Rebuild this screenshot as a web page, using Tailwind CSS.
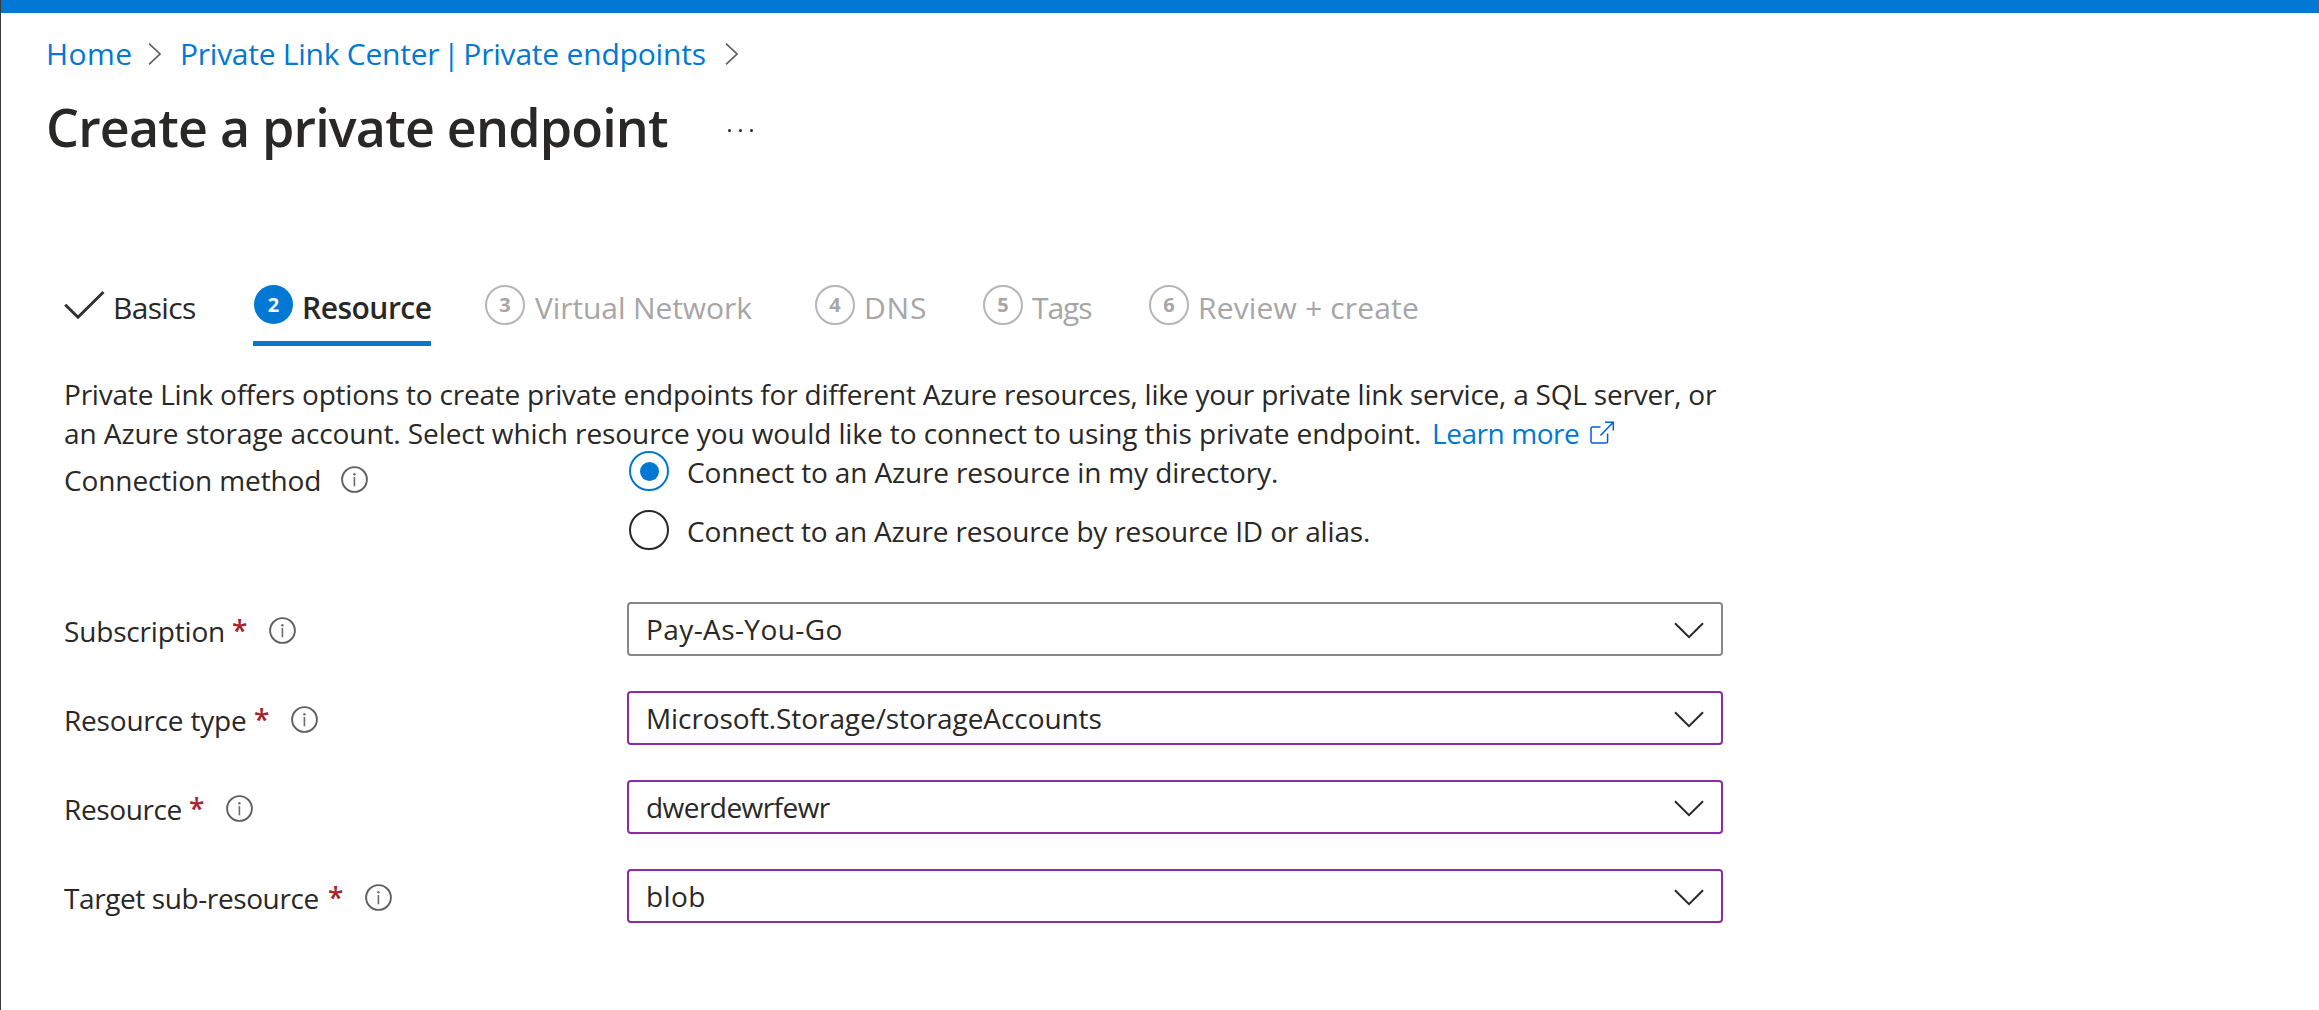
<!DOCTYPE html>
<html lang="en">
<head>
<meta charset="utf-8">
<title>Create a private endpoint</title>
<script src="https://cdn.jsdelivr.net/npm/@tailwindcss/browser@4"></script>
</head>
<body class="h-[1010px] overflow-hidden bg-white font-['Open_Sans',sans-serif] text-[#292827]">
<svg class="hidden">
  <symbol id="info" viewBox="0 0 27 27"><circle cx="13.5" cy="13.5" r="12.4" fill="none" stroke="#5f5f5f" stroke-width="1.9"/><path d="M13.4 11v9.3" stroke="#6b6b6b" stroke-width="1.6"/><circle cx="13.4" cy="8.2" r="1.2" fill="#6b6b6b"/></symbol>
  <symbol id="crumb" viewBox="0 0 13 22"><path d="M1 .6L12 11 1 21.4" fill="none" stroke="#605e5c" stroke-width="1.6"/></symbol>
  <symbol id="down" viewBox="0 0 30 17"><path d="M1 1.2L15 15.2 29 1.2" fill="none" stroke="#292827" stroke-width="2"/></symbol>
</svg>
<div class="flex h-full flex-col border-l border-[#3b3a39] whitespace-nowrap">
  <div class="h-[13px] shrink-0 bg-[#0078d4]"></div>

  <nav class="mt-[21px] flex h-10 items-center pl-[45px] text-[30px] leading-10 text-[#0078d4]">
    <a class="w-[102px] tracking-[0.4px]">Home</a>
    <svg class="h-[22px] w-[13px]"><use href="#crumb"/></svg>
    <a class="ml-[19px] w-[545px]"><span class="tracking-[-0.25px]">Private Link Center</span> <span class="ml-[-4px]">|</span> <span class="ml-[-4px] tracking-[-0.2px]">Private endpoints</span></a>
    <svg class="h-[22px] w-[13px]"><use href="#crumb"/></svg>
  </nav>

  <header class="mt-[18px] flex h-[70px] items-center pl-[45px]">
    <h1 class="w-[682px] text-[52px] leading-[70px] font-semibold tracking-[-0.81px]">Create a private endpoint</h1>
    <div class="mt-[7px] flex gap-[8px]">
      <i class="size-[3px] rounded-full bg-[#292827]"></i><i class="size-[3px] rounded-full bg-[#292827]"></i><i class="size-[3px] rounded-full bg-[#292827]"></i>
    </div>
  </header>

  <div class="mt-[122px] flex h-[62px] items-start pl-[63px] text-[30px] leading-10 text-[#a6a6a6]">
    <div class="flex w-[189px] text-[#292827]">
      <svg class="mt-[6px] h-[30px] w-[41px]" viewBox="0 0 41 30"><path d="M1.2 14.7L14 27.2 39.5 2" fill="none" stroke="#323130" stroke-width="3"/></svg>
      <span class="mt-[4px] ml-[8px] tracking-[-0.66px]">Basics</span>
    </div>
    <div class="flex h-[62px] w-[178px] border-b-5 border-[#0078d4] text-[#292827]">
      <span class="mt-px ml-px flex size-[39px] shrink-0 items-center justify-center rounded-full bg-[#0078d4] text-[20px] font-bold text-white">2</span>
      <span class="mt-[4px] ml-[9px] font-semibold tracking-[-0.5px]">Resource</span>
    </div>
    <div class="ml-[54px] flex w-[330px]">
      <span class="mt-px flex size-10 shrink-0 items-center justify-center rounded-full border-2 border-[#b5b5b5] text-[20px] font-bold">3</span>
      <span class="mt-[4px] ml-[10px] tracking-[-0.1px]">Virtual Network</span>
    </div>
    <div class="flex w-[168px]">
      <span class="mt-px flex size-10 shrink-0 items-center justify-center rounded-full border-2 border-[#b5b5b5] text-[20px] font-bold">4</span>
      <span class="mt-[4px] ml-[9px] tracking-[0.82px]">DNS</span>
    </div>
    <div class="flex w-[166px]">
      <span class="mt-px flex size-10 shrink-0 items-center justify-center rounded-full border-2 border-[#b5b5b5] text-[20px] font-bold">5</span>
      <span class="mt-[4px] ml-[9px] tracking-[-1.1px]">Tags</span>
    </div>
    <div class="flex">
      <span class="mt-px flex size-10 shrink-0 items-center justify-center rounded-full border-2 border-[#b5b5b5] text-[20px] font-bold">6</span>
      <span class="mt-[4px] ml-[9px] tracking-[0.17px]">Review + create</span>
    </div>
  </div>

  <main class="text-[28px] leading-10">
    <div class="mt-[29px] pl-[63px] leading-[39px]">
      <p class="tracking-[-0.209px]">Private Link offers options to create private endpoints for different Azure resources, like your private link service, a SQL server, or</p>
      <div class="flex">
        <p class="w-[1368px] tracking-[-0.083px]">an Azure storage account. Select which resource you would like to connect to using this private endpoint.</p>
        <a class="w-[157px] tracking-[-0.44px] text-[#0078d4]">Learn more</a>
        <svg class="mt-[7px] h-[24px] w-[26px]" viewBox="0 0 26 24"><path d="M11.5 6H3.6Q2 6 2 7.600V20.400Q2 22 3.600 22H17Q18.600 22 18.600 20.400V12.500M11.500 14.500L24 1.500M16 1.300H24.300V9.500" fill="none" stroke="#015cda" stroke-width="1.500"/></svg>
      </div>
    </div>

    <section class="mt-[-2px] flex h-[99px] pl-[63px]">
      <div class="mt-[9px] flex w-[565px]">
        <span class="w-[277px] tracking-[-0.1px]">Connection method</span>
        <svg class="mt-[6px] size-[27px]"><use href="#info"/></svg>
      </div>
      <div class="flex flex-col gap-[19px]">
        <label class="flex h-10"><span class="flex size-10 items-center justify-center rounded-full border-2 border-[#0078d4]"><i class="size-[19px] rounded-full bg-[#0078d4]"></i></span><span class="mt-px ml-[18px] tracking-[-0.135px]">Connect to an Azure resource in my directory.</span></label>
        <label class="flex h-10"><span class="size-10 rounded-full border-2 border-[#292827]"></span><span class="mt-px ml-[18px] tracking-[-0.164px]">Connect to an Azure resource by resource ID or alias.</span></label>
      </div>
    </section>

    <section class="mt-[52px] flex flex-col gap-[35px] pl-[63px]">
      <div class="flex h-[54px]">
        <div class="mt-[9px] flex w-[563px]"><span class="w-[168px] tracking-[-0.17px]">Subscription</span><b class="mt-[-1px] w-[37px] font-semibold text-[#a4262c]">*</b><svg class="mt-[6px] size-[27px]"><use href="#info"/></svg></div>
        <div class="flex w-[1096px] items-center justify-between rounded-[4px] border-2 border-[#8a8886] pr-[17px] pl-[17px]"><span class="tracking-[0.41px]">Pay-As-You-Go</span><svg class="mt-[2px] h-[17px] w-[30px]"><use href="#down"/></svg></div>
      </div>
      <div class="flex h-[54px]">
        <div class="mt-[9px] flex w-[563px]"><span class="w-[190px] tracking-[-0.2px]">Resource type</span><b class="mt-[-1px] w-[37px] font-semibold text-[#a4262c]">*</b><svg class="mt-[6px] size-[27px]"><use href="#info"/></svg></div>
        <div class="flex w-[1096px] items-center justify-between rounded-[4px] border-2 border-[#8a2da5] pr-[17px] pl-[17px]"><span class="tracking-[-0.08px]">Microsoft.Storage/storageAccounts</span><svg class="mt-[2px] h-[17px] w-[30px]"><use href="#down"/></svg></div>
      </div>
      <div class="flex h-[54px]">
        <div class="mt-[9px] flex w-[563px]"><span class="w-[125px] tracking-[-0.39px]">Resource</span><b class="mt-[-1px] w-[37px] font-semibold text-[#a4262c]">*</b><svg class="mt-[6px] size-[27px]"><use href="#info"/></svg></div>
        <div class="flex w-[1096px] items-center justify-between rounded-[4px] border-2 border-[#8a2da5] pr-[17px] pl-[17px]"><span class="tracking-[-0.55px]">dwerdewrfewr</span><svg class="mt-[2px] h-[17px] w-[30px]"><use href="#down"/></svg></div>
      </div>
      <div class="flex h-[54px]">
        <div class="mt-[9px] flex w-[563px]"><span class="w-[264px] tracking-[-0.4px]">Target sub-resource</span><b class="mt-[-1px] w-[37px] font-semibold text-[#a4262c]">*</b><svg class="mt-[6px] size-[27px]"><use href="#info"/></svg></div>
        <div class="flex w-[1096px] items-center justify-between rounded-[4px] border-2 border-[#8a2da5] pr-[17px] pl-[17px]"><span class="tracking-[0.4px]">blob</span><svg class="mt-[2px] h-[17px] w-[30px]"><use href="#down"/></svg></div>
      </div>
    </section>
  </main>
</div>
</body>
</html>
